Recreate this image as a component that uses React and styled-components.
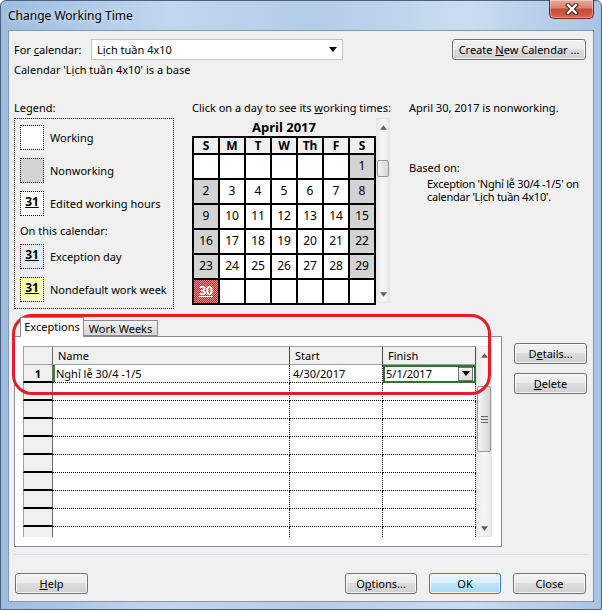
import React from 'react'
import styled, { createGlobalStyle } from 'styled-components'

const GlobalStyle = createGlobalStyle`
  html, body {
    margin: 0;
    padding: 0;
  }
  body {
    width: 602px;
    height: 610px;
    overflow: hidden;
    background: #fff;
    font-family: "Noto Sans", "Open Sans", sans-serif;
    font-size: 11px;
    color: #000;
  }
  * {
    box-sizing: border-box;
  }
`

const Window = styled.div`
  position: relative;
  width: 602px;
  height: 610px;
  display: flex;
  flex-direction: column;
  border: 1px solid #4d627f;
  border-radius: 6px 6px 0 0;
  background: linear-gradient(90deg, #9dbde2 0%, #c2d7ee 28%, #b3cce8 52%, #cadcf0 78%, #a8c4e5 100%);
`

const TitleBar = styled.div`
  height: 29px;
  flex-shrink: 0;
  display: flex;
  align-items: center;
  justify-content: space-between;
  padding: 0 7px 0 7px;
`

const Title = styled.span`
  font-size: 12px;
  color: #000;
  text-shadow: 0 0 6px rgba(255, 255, 255, 0.9);
`

const CloseBox = styled.div`
  align-self: flex-start;
  width: 45px;
  height: 19px;
  margin-top: -1px;
  display: flex;
  align-items: center;
  justify-content: center;
  border: 1px solid #6b2b22;
  border-top: none;
  border-radius: 0 0 5px 5px;
  background: linear-gradient(#e9a99b 0%, #d9806d 45%, #c54a34 50%, #d4664c 100%);
  box-shadow: inset 0 0 0 1px rgba(255, 255, 255, 0.35);
`

const Client = styled.div`
  flex: 1;
  margin: 0 7px 7px 7px;
  border: 1px solid #8496b0;
  background: #f0f0f0;
  padding: 8px 7px 0 5px;
  display: flex;
  flex-direction: column;
`

const TopRow = styled.div`
  height: 21px;
  display: flex;
  align-items: center;
`

const FieldLabel = styled.span`
  width: 77px;
`

const Select = styled.div`
  width: 252px;
  height: 21px;
  background: #fff;
  border: 1px solid #c5c7cc;
  display: flex;
  align-items: center;
  justify-content: space-between;
  padding: 0 5px 0 5px;
`

const Btn = styled.button`
  width: ${p => p.$w || 72}px;
  height: 21px;
  padding: 0;
  flex-shrink: 0;
  font-family: "Noto Sans", "Open Sans", sans-serif;
  font-size: 11px;
  color: #000;
  border: 1px solid ${p => (p.$primary ? '#3c7fb1' : '#707070')};
  border-radius: 3px;
  background: ${p =>
    p.$primary
      ? 'linear-gradient(#eaf6fd 0%, #d9f0fc 45%, #bee6fd 50%, #a7d9f5 100%)'
      : 'linear-gradient(#f2f2f2 0%, #ebebeb 45%, #dddddd 50%, #cfcfcf 100%)'};
  box-shadow: inset 0 0 0 1px rgba(255, 255, 255, 0.75);
  margin-left: ${p => (p.$auto ? 'auto' : '0')};
`

const BaseText = styled.div`
  margin-top: 3px;
  line-height: 14px;
`

const Middle = styled.div`
  margin-top: 24px;
  display: flex;
  align-items: flex-start;
`

const LegendCol = styled.div`
  width: 160px;
  flex-shrink: 0;
`

const Line = styled.div`
  line-height: 14px;
  white-space: nowrap;
`

const LegendBox = styled.div`
  margin-top: 3px;
  border: 1px dotted #000;
  padding: 6px 5px 6px 5px;
  display: flex;
  flex-direction: column;
`

const LegendRow = styled.div`
  display: flex;
  align-items: center;
  gap: 6px;
  height: 25px;
  margin-top: ${p => p.$gap || 0}px;
`

const Swatch = styled.div`
  width: 24px;
  height: 25px;
  border: 1px dotted #000;
  display: flex;
  justify-content: center;
  padding-top: 3px;
  font-size: 12px;
  font-weight: 700;
  line-height: 14px;
  text-decoration: underline;
  background: ${p =>
    p.$kind === 'off'
      ? '#d3d3d3'
      : p.$kind === 'exc'
      ? 'repeating-conic-gradient(#b8f0f7 0 25%, #effcfd 0 50%) 0 0 / 2px 2px'
      : p.$kind === 'week'
      ? 'repeating-conic-gradient(#f8f8b0 0 25%, #fffff2 0 50%) 0 0 / 2px 2px'
      : '#fff'};
`

const SubHead = styled.div`
  margin-top: 8px;
  line-height: 14px;
`

const CalCol = styled.div`
  width: 198px;
  margin-left: 18px;
  flex-shrink: 0;
`

const CalBody = styled.div`
  margin-top: 3px;
  display: flex;
  align-items: flex-start;
`

const Month = styled.div`
  height: 18px;
  line-height: 18px;
  text-align: center;
  font-size: 13px;
  font-weight: 700;
`

const CalGrid = styled.div`
  width: 184px;
  display: grid;
  grid-template-columns: repeat(7, 24px);
  grid-template-rows: 15px repeat(6, 23px);
  gap: 2px;
  padding: 2px;
  background: #000;
`

const DayHead = styled.div`
  background: #f0f0f0;
  display: flex;
  align-items: center;
  justify-content: center;
  font-size: 12px;
  font-weight: 700;
`

const Day = styled.div`
  display: flex;
  align-items: center;
  justify-content: center;
  padding-bottom: 3px;
  font-size: 12px;
  color: ${p => (p.$exc ? '#fff' : '#000')};
  font-weight: ${p => (p.$exc ? 700 : 400)};
  text-decoration: ${p => (p.$exc ? 'underline' : 'none')};
  background: ${p =>
    p.$exc
      ? 'repeating-conic-gradient(#c02a2a 0 25%, #f08a8a 0 50%) 0 0 / 2px 2px'
      : p.$off
      ? '#d3d3d3'
      : '#fff'};
`

const VScroll = styled.div`
  width: ${p => p.$w}px;
  height: ${p => p.$h}px;
  flex-shrink: 0;
  display: flex;
  flex-direction: column;
  align-items: center;
  justify-content: space-between;
  padding: 6px 0 5px 0;
  background: linear-gradient(90deg, #e8e8e8, #f5f5f5 40%, #f5f5f5 60%, #e8e8e8);
  border: 1px solid #e6e6e6;
`

const Thumb = styled.div`
  width: ${p => p.$w}px;
  height: ${p => p.$h}px;
  margin-top: ${p => p.$top}px;
  margin-bottom: auto;
  border: 1px solid #979797;
  border-radius: 2px;
  background: linear-gradient(90deg, #f4f4f4, #e6e6e6 50%, #d6d6d6);
  display: flex;
  flex-direction: column;
  align-items: center;
  justify-content: center;
  gap: 2px;
`

const Grip = styled.span`
  width: 7px;
  height: 1px;
  background: #666;
`

const InfoCol = styled.div`
  margin-left: 19px;
  flex: 1;
`

const BasedOn = styled.div`
  margin-top: 46px;
  line-height: 14px;
`

const Indent = styled.div`
  margin-top: 2px;
  margin-left: 18px;
  line-height: 13px;
  white-space: nowrap;
  letter-spacing: -0.25px;
`

const TabsSection = styled.div`
  margin-top: 8px;
  display: flex;
  align-items: flex-start;
`

const TabsArea = styled.div`
  width: 488px;
  flex-shrink: 0;
`

const TabStrip = styled.div`
  height: 19px;
  display: flex;
  align-items: flex-end;
  padding-left: 6px;
`

const Tab = styled.div`
  position: relative;
  z-index: ${p => (p.$active ? 1 : 0)};
  width: ${p => p.$w}px;
  height: ${p => (p.$active ? 20 : 16)}px;
  margin-bottom: ${p => (p.$active ? -1 : 0)}px;
  border: 1px solid #898c95;
  border-bottom: ${p => (p.$active ? 'none' : '1px solid #898c95')};
  border-left: ${p => (p.$active ? '1px solid #898c95' : 'none')};
  background: ${p => (p.$active ? '#fff' : 'linear-gradient(#f3f3f3, #e2e2e2 50%, #d6d6d6)')};
  display: flex;
  align-items: center;
  justify-content: center;
  padding-bottom: ${p => (p.$active ? 3 : 0)}px;
`

const Panel = styled.div`
  height: 211px;
  border: 1px solid #898c95;
  background: #fff;
  padding: 9px 9px 9px 8px;
`

const Sheet = styled.div`
  height: 191px;
  display: flex;
`

const Table = styled.div`
  width: 453px;
  height: 191px;
  overflow: hidden;
  display: flex;
  flex-direction: column;
`

const GridRow = styled.div`
  flex-shrink: 0;
  height: ${p => p.$h}px;
  display: grid;
  grid-template-columns: 30px 237px 93px 93px;
  border-top: ${p => (p.$head ? '1px solid #a0a0a0' : 'none')};
`

const RowHead = styled.div`
  background: #f0f0f0;
  border-left: 1px solid #a0a0a0;
  border-right: 1px solid #6a6a6a;
  border-bottom: ${p => (p.$head ? '1px solid #a0a0a0' : '2px solid #000')};
  display: flex;
  align-items: center;
  justify-content: center;
  font-weight: 700;
`

const HeadCell = styled.div`
  background: #f0f0f0;
  border-right: 1px solid #4a4a4a;
  border-bottom: 1px solid #a0a0a0;
  display: flex;
  align-items: flex-end;
  padding: 0 0 1px 5px;
`

const Cell = styled.div`
  position: relative;
  border-right: 1px dotted #000;
  border-bottom: 1px dotted #000;
  display: flex;
  align-items: center;
  padding-left: 3px;
  white-space: nowrap;
  overflow: hidden;
  box-shadow: ${p => (p.$mark ? 'inset 2px 0 0 #3d7a3d' : 'none')};
`

const EditCell = styled(Cell)`
  outline: 2px solid #356f35;
  outline-offset: -2px;
  padding-right: 2px;
`

const DropBtn = styled.div`
  margin-left: auto;
  width: 15px;
  height: 14px;
  border: 1px solid #707070;
  background: linear-gradient(#f4f4f4, #dcdcdc);
  display: flex;
  align-items: center;
  justify-content: center;
`

const SideButtons = styled.div`
  margin-left: 12px;
  padding-top: 26px;
  display: flex;
  flex-direction: column;
  gap: 9px;
`

const Separator = styled.div`
  margin-top: 7px;
  width: 574px;
  height: 1px;
  background: #d5dfe5;
  flex-shrink: 0;
`

const BottomRow = styled.div`
  margin-top: 18px;
  display: flex;
  align-items: center;
  gap: 12px;
  padding-left: 1px;
`

const Callout = styled.div`
  position: absolute;
  left: 11px;
  top: 313px;
  width: 479px;
  height: 81px;
  border: 3px solid #e51d26;
  border-radius: 20px;
  pointer-events: none;
`

const Arrow = ({ up, color = '#606060', size = 7 }) => (
  <svg width={size} height={Math.ceil(size / 2) + 1} viewBox="0 0 8 5">
    <path d={up ? 'M0 5 L4 0 L8 5 Z' : 'M0 0 L8 0 L4 5 Z'} fill={color} />
  </svg>
)

const CloseGlyph = () => (
  <svg width="14" height="12" viewBox="0 0 14 12">
    <path d="M3 2 L11 10 M11 2 L3 10" stroke="#3b1a16" strokeWidth="4.4" strokeLinecap="square" />
    <path d="M3 2 L11 10 M11 2 L3 10" stroke="#fff" strokeWidth="2.4" strokeLinecap="square" />
  </svg>
)

const weekDays = ['S', 'M', 'T', 'W', 'Th', 'F', 'S']
const days = [
  '', '', '', '', '', '', 1,
  2, 3, 4, 5, 6, 7, 8,
  9, 10, 11, 12, 13, 14, 15,
  16, 17, 18, 19, 20, 21, 22,
  23, 24, 25, 26, 27, 28, 29,
  30, '', '', '', '', '', '',
]

const emptyRows = Array.from({ length: 9 }, (_, i) => i)

export default function App() {
  return (
    <>
      <GlobalStyle />
      <Window>
        <TitleBar>
          <Title>Change Working Time</Title>
          <CloseBox>
            <CloseGlyph />
          </CloseBox>
        </TitleBar>
        <Client>
          <TopRow>
            <FieldLabel>For <u>c</u>alendar:</FieldLabel>
            <Select>
              <span>Lịch tuần 4x10</span>
              <Arrow color="#000" size={8} />
            </Select>
            <Btn $w={134} $auto>Create <u>N</u>ew Calendar ...</Btn>
          </TopRow>
          <BaseText>Calendar 'Lịch tuần 4x10' is a base</BaseText>

          <Middle>
            <LegendCol>
              <Line>Legend:</Line>
              <LegendBox>
                <LegendRow>
                  <Swatch />
                  <span>Working</span>
                </LegendRow>
                <LegendRow $gap={8}>
                  <Swatch $kind="off" />
                  <span>Nonworking</span>
                </LegendRow>
                <LegendRow $gap={8}>
                  <Swatch>31</Swatch>
                  <span>Edited working hours</span>
                </LegendRow>
                <SubHead>On this calendar:</SubHead>
                <LegendRow $gap={6}>
                  <Swatch $kind="exc">31</Swatch>
                  <span>Exception day</span>
                </LegendRow>
                <LegendRow $gap={8}>
                  <Swatch $kind="week">31</Swatch>
                  <span>Nondefault work week</span>
                </LegendRow>
              </LegendBox>
            </LegendCol>

            <CalCol>
              <Line>Click on a day to see its <u>w</u>orking times:</Line>
              <CalBody>
                <div>
                  <Month>April 2017</Month>
                  <CalGrid>
                    {weekDays.map((d, i) => (
                      <DayHead key={'h' + i}>{d}</DayHead>
                    ))}
                    {days.map((d, i) => {
                      const col = i % 7
                      const off = d !== '' && (col === 0 || col === 6) && d !== 30
                      return (
                        <Day key={i} $off={off} $exc={d === 30}>
                          {d}
                        </Day>
                      )
                    })}
                  </CalGrid>
                </div>
                <VScroll $w={14} $h={185}>
                  <Arrow up />
                  <Thumb $w={12} $h={17} $top={30} />
                  <Arrow />
                </VScroll>
              </CalBody>
            </CalCol>

            <InfoCol>
              <Line>April 30, 2017 is nonworking.</Line>
              <BasedOn>Based on:</BasedOn>
              <Indent>
                Exception 'Nghỉ lễ 30/4 -1/5' on
                <br />
                calendar 'Lịch tuần 4x10'.
              </Indent>
            </InfoCol>
          </Middle>

          <TabsSection>
            <TabsArea>
              <TabStrip>
                <Tab $active $w={64}>Exceptions</Tab>
                <Tab $w={74}>Work Weeks</Tab>
              </TabStrip>
              <Panel>
                <Sheet>
                  <Table>
                    <GridRow $h={19} $head>
                      <RowHead $head />
                      <HeadCell>Name</HeadCell>
                      <HeadCell>Start</HeadCell>
                      <HeadCell>Finish</HeadCell>
                    </GridRow>
                    <GridRow $h={18}>
                      <RowHead>1</RowHead>
                      <Cell $mark>Nghỉ lễ 30/4 -1/5</Cell>
                      <Cell>4/30/2017</Cell>
                      <EditCell>
                        5/1/2017
                        <DropBtn>
                          <Arrow color="#000" size={8} />
                        </DropBtn>
                      </EditCell>
                    </GridRow>
                    {emptyRows.map(r => (
                      <GridRow key={r} $h={18}>
                        <RowHead />
                        <Cell />
                        <Cell />
                        <Cell />
                      </GridRow>
                    ))}
                  </Table>
                  <VScroll $w={16} $h={191}>
                    <Arrow up />
                    <Thumb $w={14} $h={66} $top={28}>
                      <Grip />
                      <Grip />
                      <Grip />
                    </Thumb>
                    <Arrow />
                  </VScroll>
                </Sheet>
              </Panel>
            </TabsArea>
            <SideButtons>
              <Btn $w={73}>D<u>e</u>tails...</Btn>
              <Btn $w={73}><u>D</u>elete</Btn>
            </SideButtons>
          </TabsSection>

          <Separator />

          <BottomRow>
            <Btn $w={73}><u>H</u>elp</Btn>
            <Btn $w={72} $auto>O<u>p</u>tions...</Btn>
            <Btn $w={72} $primary>OK</Btn>
            <Btn $w={73}>Close</Btn>
          </BottomRow>
        </Client>
        <Callout />
      </Window>
    </>
  )
}
